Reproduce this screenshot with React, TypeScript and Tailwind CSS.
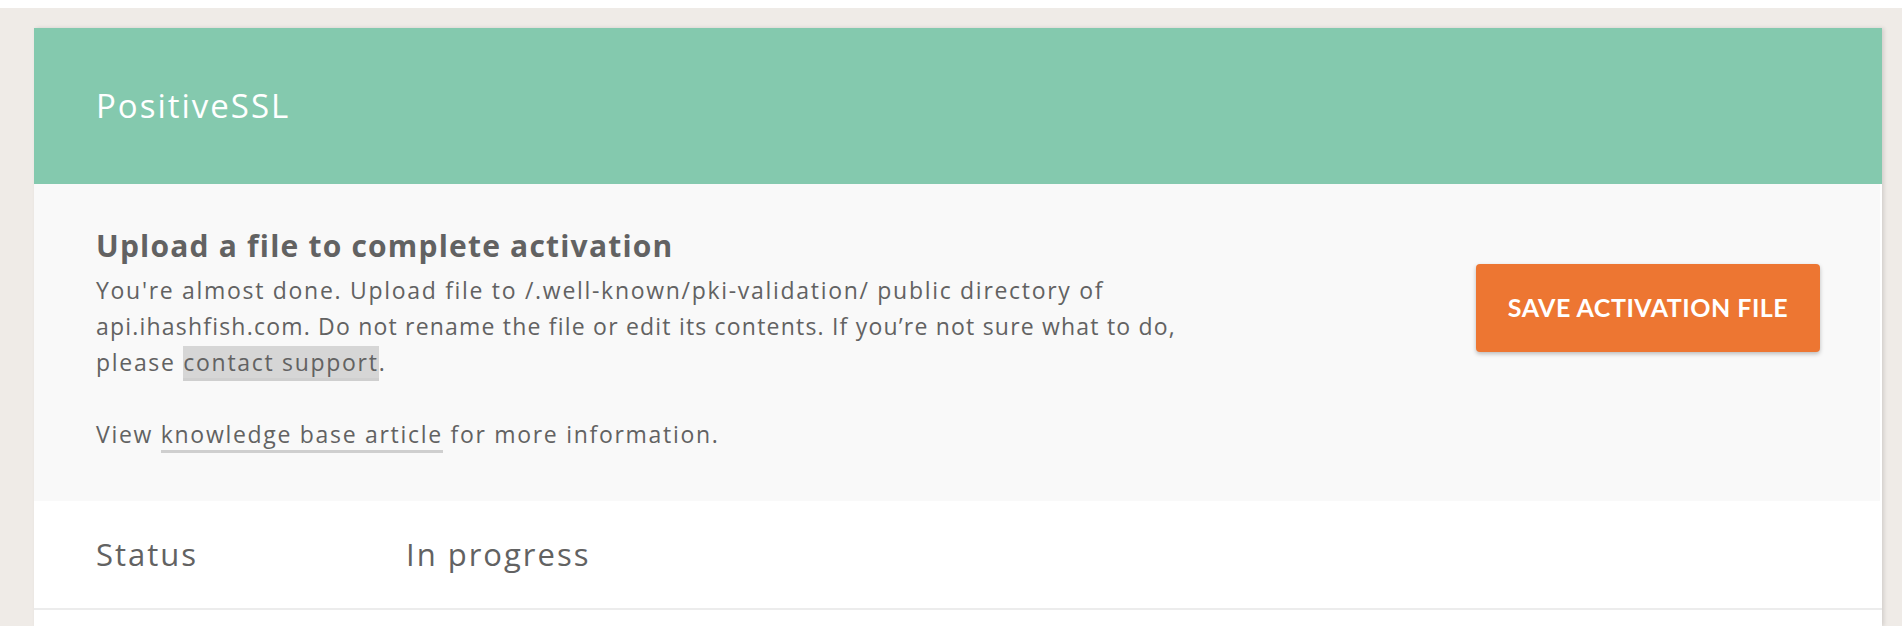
import React from 'react';

const body = { fontFamily: '"Open Sans", Lato, sans-serif' };
const btn = { fontFamily: 'Lato, "Open Sans", sans-serif' };

const App: React.FC = () => {
  return (
    <div className="min-h-[626px] bg-white pt-2" style={body}>
      <div className="bg-[#efebe7] pt-5 pl-[34px] pr-5 pb-4">
        <div className="bg-white shadow-[2px_0_4px_rgba(0,0,0,0.12)]">
          {/* header */}
          <div className="flex h-[156px] items-center bg-[#84c9ae] px-[62px]">
            <h1 className="text-[33px] tracking-[2px] text-white">PositiveSSL</h1>
          </div>

          {/* activation notice */}
          <div className="mr-[2px] flex items-start justify-between bg-[#f9f9f9] pt-10 pr-[60px] pb-[49px] pl-[62px] text-[#626262]">
            <div className="max-w-[1200px]">
              <h2 className="text-[30px] font-bold leading-[44px] tracking-[1.2px]">
                Upload a file to complete activation
              </h2>
              <p className="mt-1 text-[23px] leading-[36px] tracking-[1.7px]">
                You're almost done. Upload file to /.well-known/pki-validation/ public directory of
                <br />
                <span className="tracking-[1.2px]">
                  api.ihashfish.com. Do not rename the file or edit its contents. If you’re not sure what to do,
                </span>
                <br />
                please{' '}
                <a className="border-b-[3px] border-[#cfcfcf] bg-[#d6d6d6]" href="#">
                  contact support
                </a>
                .
              </p>
              <p className="mt-9 text-[23px] leading-[36px] tracking-[1.7px]">
                View{' '}
                <a className="border-b-[3px] border-[#cfcfcf]" href="#">
                  knowledge base article
                </a>{' '}
                for more information.
              </p>
            </div>
            <button
              className="mt-10 h-[88px] w-[344px] shrink-0 rounded-[4px] bg-[#ed7632] text-[25px] font-bold tracking-[0.5px] text-white shadow-[0_2px_4px_rgba(0,0,0,0.25)]"
              style={btn}
            >
              SAVE ACTIVATION FILE
            </button>
          </div>

          {/* status row */}
          <div className="flex h-[109px] items-center border-b-2 border-[#ececec] px-[62px] text-[31px] tracking-[2px] text-[#626262]">
            <div className="w-[310px]">Status</div>
            <div>In progress</div>
          </div>
          <div className="h-4" />
        </div>
      </div>
    </div>
  );
};

export default App;
